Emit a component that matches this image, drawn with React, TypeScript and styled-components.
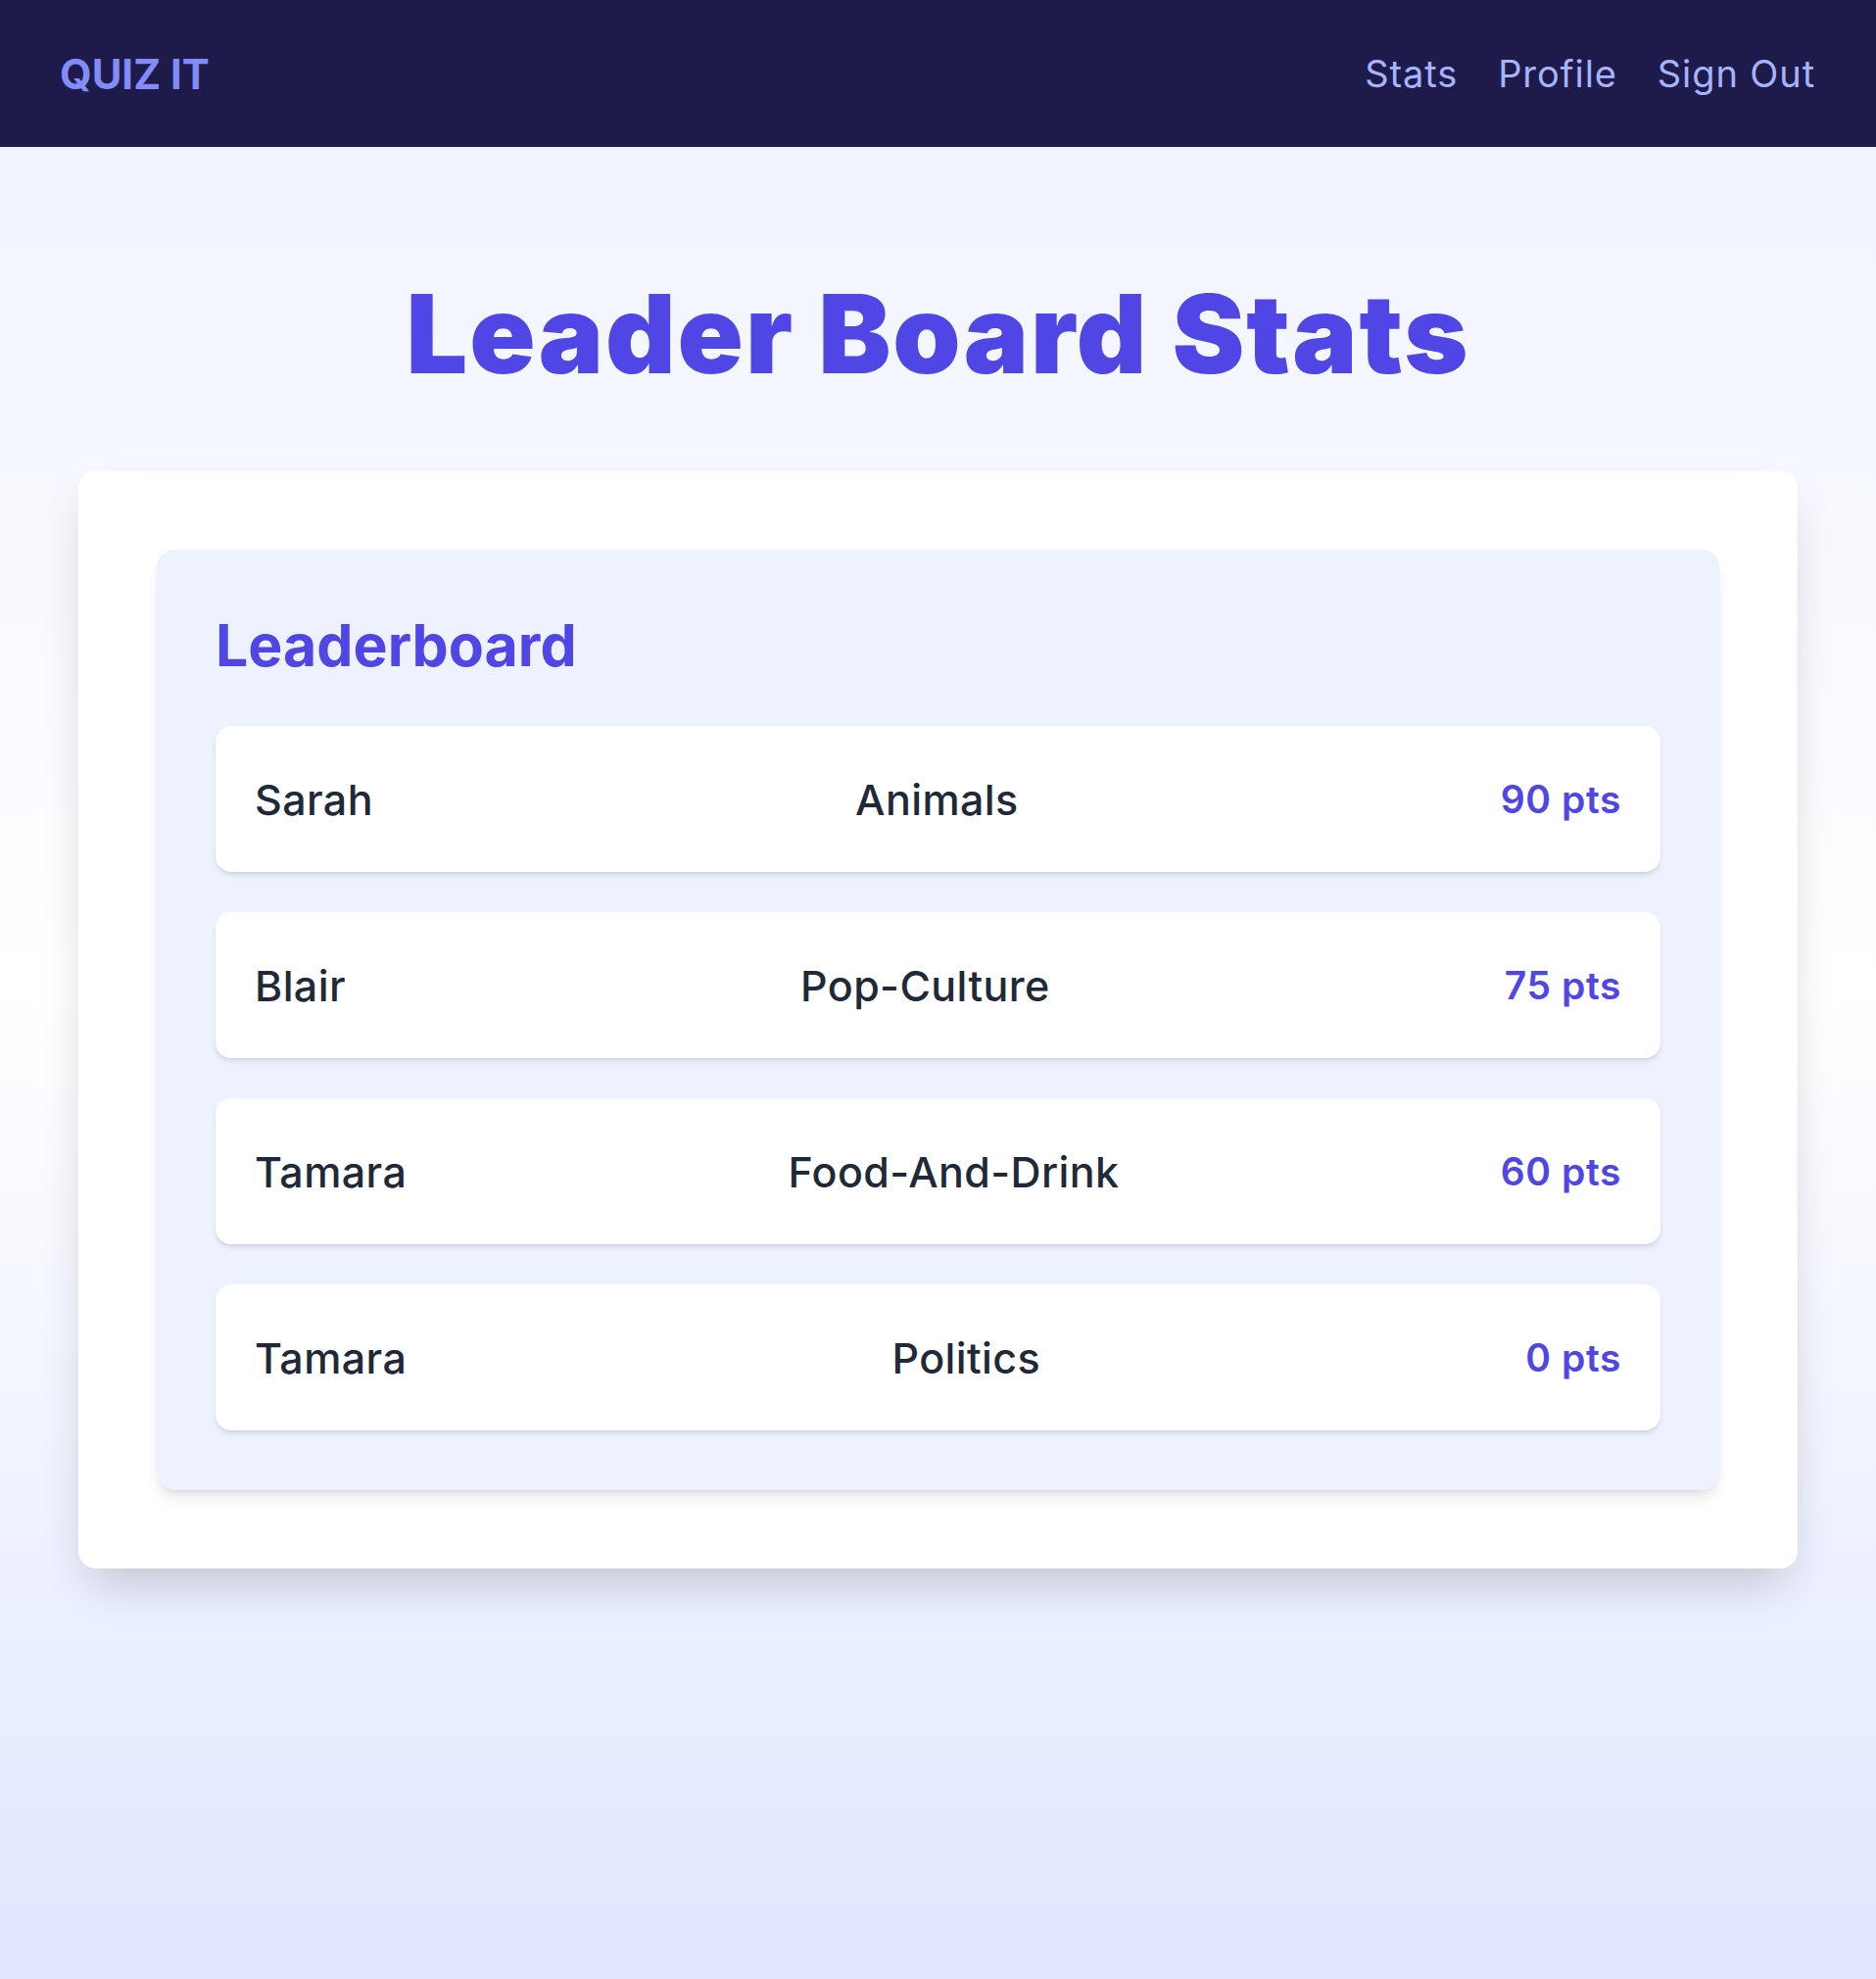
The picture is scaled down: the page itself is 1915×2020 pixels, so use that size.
import styled, { createGlobalStyle } from 'styled-components';

const GlobalStyle = createGlobalStyle`
  * {
    box-sizing: border-box;
  }
  body {
    margin: 0;
    font-family: Inter, "Liberation Sans", Arial, sans-serif;
  }
`

const Page = styled.div`
  min-height: 100vh;
  background: linear-gradient(to bottom, #eef2ff, #ffffff 50%, #e0e7ff);
`

const Navbar = styled.nav`
  display: flex;
  align-items: center;
  justify-content: space-between;
  height: 150px;
  padding: 0 62px 0 61px;
  background-color: #1e1b4b;
`

const Logo = styled.a`
  color: #818cf8;
  font-size: 42px;
  font-weight: 700;
  text-decoration: none;
`

const NavLinks = styled.div`
  display: flex;
  align-items: center;
  gap: 41px;
`

const NavLink = styled.a`
  color: #a5b4fc;
  font-size: 38px;
  font-weight: 400;
  letter-spacing: 0.9px;
  text-decoration: none;
`

const Main = styled.main`
  display: flex;
  flex-direction: column;
  align-items: center;
  padding: 136px 80px 80px;
`

const Title = styled.h1`
  margin: 0 0 85px;
  color: #4f46e5;
  font-size: 111px;
  font-weight: 900;
  line-height: 110px;
  letter-spacing: 2px;
`

const OuterCard = styled.section`
  width: 100%;
  padding: 80px;
  background-color: #ffffff;
  border-radius: 18px;
  box-shadow: 0 25px 50px -12px rgba(0, 0, 0, 0.2);
`

const BoardCard = styled.div`
  padding: 62px 60px 61px;
  background-color: #eef2ff;
  border-radius: 18px;
  box-shadow: 0 10px 15px -3px rgba(0, 0, 0, 0.1), 0 4px 6px -4px rgba(0, 0, 0, 0.1);
`

const BoardTitle = styled.h2`
  margin: 0 0 46px;
  color: #4f46e5;
  font-size: 59px;
  font-weight: 700;
  line-height: 72px;
`

const List = styled.ul`
  display: flex;
  flex-direction: column;
  gap: 41px;
  margin: 0;
  padding: 0;
  list-style: none;
`

const Row = styled.li`
  display: flex;
  align-items: center;
  justify-content: space-between;
  height: 149px;
  padding: 0 40px;
  background-color: #ffffff;
  border-radius: 16px;
  box-shadow: 0 4px 6px -1px rgba(0, 0, 0, 0.1), 0 2px 4px -2px rgba(0, 0, 0, 0.1);
`

const Cell = styled.span`
  color: #1f2937;
  font-size: 43px;
  font-weight: 500;
  letter-spacing: 0.4px;
`

const Points = styled.span`
  color: #4f46e5;
  font-size: 39px;
  font-weight: 600;
  letter-spacing: 0.6px;
`

const scores = [
  { name: 'Sarah', category: 'Animals', points: 90 },
  { name: 'Blair', category: 'Pop-Culture', points: 75 },
  { name: 'Tamara', category: 'Food-And-Drink', points: 60 },
  { name: 'Tamara', category: 'Politics', points: 0 },
]

function App() {
  return (
    <Page>
      <GlobalStyle />
      <Navbar>
        <Logo href="#">QUIZ IT</Logo>
        <NavLinks>
          <NavLink href="#">Stats</NavLink>
          <NavLink href="#">Profile</NavLink>
          <NavLink href="#">Sign Out</NavLink>
        </NavLinks>
      </Navbar>
      <Main>
        <Title>Leader Board Stats</Title>
        <OuterCard>
          <BoardCard>
            <BoardTitle>Leaderboard</BoardTitle>
            <List>
              {scores.map((score, i) => (
                <Row key={i}>
                  <Cell>{score.name}</Cell>
                  <Cell>{score.category}</Cell>
                  <Points>{score.points} pts</Points>
                </Row>
              ))}
            </List>
          </BoardCard>
        </OuterCard>
      </Main>
    </Page>
  )
}

export default App
